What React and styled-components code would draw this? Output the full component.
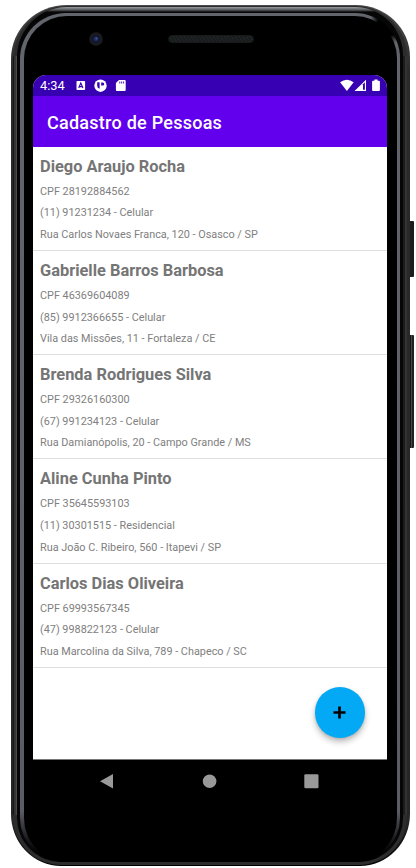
import React from "react";
import styled, { createGlobalStyle } from "styled-components";

const GlobalStyle = createGlobalStyle`
  * { box-sizing: border-box; }
  html, body { margin: 0; background: #fff; overflow: hidden; }
  body { font-family: Roboto, "Liberation Sans", sans-serif; }
`;

const Stage = styled.main`
  width: 416px;
  height: 868px;
  padding: 5px 0 0 11px;
  display: flex;
  align-items: flex-start;
  background: #fff;
`;

const Frame = styled.div`
  width: 399px;
  height: 861px;
  flex: none;
  padding: 1px 3px 1px 2px;
  border-radius: 56px 54px 50px 50px / 54px 52px 52px 52px;
  background: linear-gradient(#4a4a4a, #2a2a2a 8%, #262626 95%, #000);
`;

const Rim = styled.div`
  height: 100%;
  padding: 1px 4px 3px 4px;
  border-radius: 54px 51px 48px 48px;
  background:
    linear-gradient(90deg, #161616 0 1px, #343434 1px 3px, #4a4a4a 3px 4px, transparent 4px calc(100% - 4px), #1c1c1c calc(100% - 4px) calc(100% - 2px), #333 calc(100% - 2px)) 0 50px / 100% calc(100% - 100px) no-repeat,
    #2c2c2c;
`;

const Bevel = styled.div`
  height: 100%;
  padding: 6px 3px 0 3px;
  border-radius: 50px 48px 44px 44px;
  background: linear-gradient(#9a9da0 0, #54575a 3px, #060606 5px);
`;

const Edge = styled.div`
  height: 100%;
  padding: 3px 3px 0 4px;
  border-radius: 46px 45px 44px 44px;
  background:
    radial-gradient(circle 20px at calc(100% - 10px) 10px, #000 60%, transparent) no-repeat,
    linear-gradient(#62656c 0, #5b5d64 94%, #15161a 97.5%, #000 99%);
`;

const Face = styled.div`
  height: 100%;
  padding: 0 10px 0 9px;
  border-radius: 43px 42px 44px 44px;
  background: #000;
`;

const Bezel = styled.div`
  height: 59px;
  display: flex;
  padding: 16px 0 0 56px;
`;

const Camera = styled.svg`
  width: 14px;
  height: 14px;
  flex: none;
`;

const Speaker = styled.div`
  width: 86px;
  height: 8px;
  margin: 3px 0 0 65px;
  border-radius: 4px;
  border: 1px solid #161919;
  background: repeating-linear-gradient(55deg, #202424 0 1px, #191c1c 1px 3px);
`;

const Screen = styled.section`
  width: 354px;
  height: 685px;
  display: flex;
  flex-direction: column;
  position: relative;
  overflow: hidden;
  border-radius: 13px 13px 0 0;
  background: #fff;
  border-bottom: 1px solid #777;
`;

const StatusBar = styled.div`
  height: 21px;
  flex: none;
  display: flex;
  align-items: center;
  padding: 0 6px 0 7px;
  background: #3700b3;
  color: #fff;
`;

const Clock = styled.span`
  width: 36px;
  font-size: 12.8px;
  line-height: 21px;
`;

const StatusIcons = styled.svg`
  width: ${(p) => p.$w}px;
  height: 21px;
  margin-left: ${(p) => p.$left || "0"};
  display: block;
`;

const AppBar = styled.header`
  height: 50.7px;
  flex: none;
  display: flex;
  align-items: center;
  padding: 2px 14px 0;
  background: #6200ee;
`;

const AppTitle = styled.h1`
  margin: 0;
  color: #fff;
  font-size: 18px;
  font-weight: 500;
  letter-spacing: 0.25px;
  white-space: nowrap;
`;

const PeopleList = styled.ul`
  list-style: none;
  margin: 0;
  padding: 0;
`;

const Person = styled.li`
  height: 104.25px;
  padding: 10px 7px 0;
  border-bottom: 1px solid #dedede;
  color: #757575;
`;

const Name = styled.h2`
  margin: 0 0 3.9px;
  font-size: 16.4px;
  line-height: 20px;
  font-weight: 700;
  white-space: nowrap;
`;

const Detail = styled.p`
  margin: 0;
  color: #808080;
  font-size: 10.85px;
  line-height: 21.7px;
  white-space: nowrap;
`;

const AddButton = styled.button`
  position: absolute;
  right: 22px;
  bottom: 21.5px;
  width: 50.5px;
  height: 50.5px;
  padding: 0;
  border: 0;
  border-radius: 50%;
  display: grid;
  place-items: center;
  background: #03a9f4;
  box-shadow: 0 4px 6px rgba(0, 0, 0, 0.25), 0 1px 3px rgba(0, 0, 0, 0.12);
`;

const NavBar = styled.svg`
  display: block;
  width: 354px;
  height: 44px;
`;

const SideKeys = styled.div`
  width: 4px;
  flex: none;
  padding-top: 216px;
  display: flex;
  flex-direction: column;
  gap: 58px;
`;

const Key = styled.div`
  height: ${(p) => p.$h}px;
  border-radius: 0 1px 1px 0;
  background: ${(p) => p.$fill};
`;

const people = [
  ["Diego Araujo Rocha", "CPF 28192884562", "(11) 91231234 - Celular", "Rua Carlos Novaes Franca, 120 - Osasco / SP"],
  ["Gabrielle Barros Barbosa", "CPF 46369604089", "(85) 9912366655 - Celular", "Vila das Missões, 11 - Fortaleza / CE"],
  ["Brenda Rodrigues Silva", "CPF 29326160300", "(67) 991234123 - Celular", "Rua Damianópolis, 20 - Campo Grande / MS"],
  ["Aline Cunha Pinto", "CPF 35645593103", "(11) 30301515 - Residencial", "Rua João C. Ribeiro, 560 - Itapevi / SP"],
  ["Carlos Dias Oliveira", "CPF 69993567345", "(47) 998822123 - Celular", "Rua Marcolina da Silva, 789 - Chapeco / SC"],
];

export default function App() {
  return (
    <>
      <GlobalStyle />
      <Stage>
        <Frame>
          <Rim>
            <Bevel>
              <Edge>
                <Face>
                  <Bezel>
                    <Camera viewBox="0 0 14 14">
                      <circle cx="7" cy="7" r="6.8" fill="#1b1b1f" />
                      <circle cx="7" cy="7" r="4.2" fill="#10162e" />
                      <circle cx="7" cy="7" r="2.6" fill="#1b2856" />
                      <circle cx="7.4" cy="6.4" r="1" fill="#4a5c9c" />
                    </Camera>
                    <Speaker />
                  </Bezel>
                  <Screen>
                    <StatusBar>
                      <Clock>4:34</Clock>
                      <StatusIcons $w={52} viewBox="76 75 52 21" fill="#fff">
                        <rect x="76.5" y="81" width="8.6" height="9" rx="0.8" />
                        <path d="M78.7 88 80.8 83 82.9 88M79.4 86.6h2.8" fill="none" stroke="#3700b3" strokeWidth="1.1" />
                        <circle cx="100.5" cy="85.7" r="6.2" />
                        <path d="M97.2 82.2h2.4v6.6q-2.4-.6-2.4-3z" fill="#3700b3" />
                        <path d="M101.2 82.4h1.4a1.6 1.6 0 0 1 0 3.2h-1.4z" fill="#3700b3" />
                        <path d="M119 80h5.7q1 0 1 1v9q0 1-1 1h-7.8q-1 0-1-1v-6.9z" />
                        <path d="M119.8 81.5v2M121.7 81.5v2M123.6 81.5v2" stroke="#3700b3" strokeWidth="0.9" />
                      </StatusIcons>
                      <StatusIcons $w={41} $left="auto" viewBox="340 75 41 21" fill="#fff">
                        <path d="M340.1 82.2q6.8-5 13.6 0L346.9 91z" />
                        <path d="M354.5 91 366 79.8V91z" />
                        <path d="M363 84.2 364.9 82.3V89.7H363z" fill="#3700b3" />
                        <path d="M374.4 79.5h3.2v1.2h1.4q.9 0 .9.9v8.5q0 .9-.9.9h-6q-.9 0-.9-.9v-8.5q0-.9.9-.9h1.4z" />
                      </StatusIcons>
                    </StatusBar>
                    <AppBar>
                      <AppTitle>Cadastro de Pessoas</AppTitle>
                    </AppBar>
                    <PeopleList>
                      {people.map(([name, ...details]) => (
                        <Person key={name}>
                          <Name>{name}</Name>
                          {details.map((d) => (
                            <Detail key={d}>{d}</Detail>
                          ))}
                        </Person>
                      ))}
                    </PeopleList>
                    <AddButton aria-label="Adicionar">
                      <svg width="13" height="13" viewBox="0 0 13 13">
                        <path d="M6.5.5v12M.5 6.5h12" stroke="#000" strokeWidth="2.7" />
                      </svg>
                    </AddButton>
                  </Screen>
                  <NavBar viewBox="33 760 354 44" fill="#999">
                    <path d="M113 774v14.6L100 781.3z" />
                    <circle cx="209.6" cy="781.2" r="6.8" />
                    <rect x="304.3" y="774.2" width="14.2" height="14" rx="1.3" />
                  </NavBar>
                </Face>
              </Edge>
            </Bevel>
          </Rim>
        </Frame>
        <SideKeys>
          <Key $h={56} $fill="#1d1d1d" />
          <Key $h={113} $fill="linear-gradient(90deg, #161616 0 25%, #4a4a4a 25% 60%, #222 60%)" />
        </SideKeys>
      </Stage>
    </>
  );
}
